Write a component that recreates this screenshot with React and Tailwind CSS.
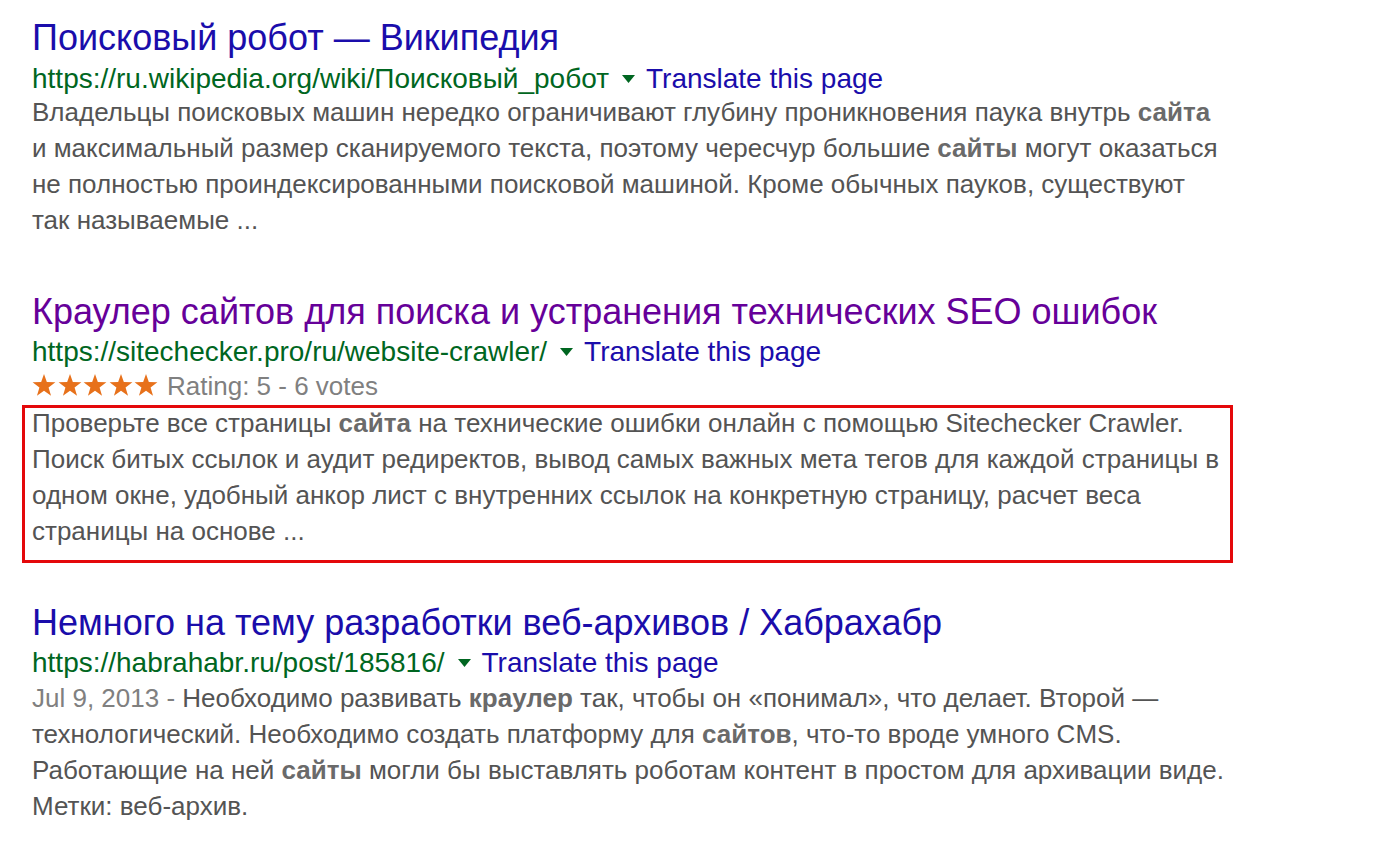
import React from "react";

function Arrow() {
  return (
    <svg width="13" height="8" viewBox="0 0 13 8" className="ml-[13px] mr-[11px] inline-block" aria-hidden="true">
      <path d="M0 0 L13 0 L6.5 8 Z" fill="#006621" />
    </svg>
  );
}

function Star() {
  return (
    <svg width="24" height="23" viewBox="0 0 24 23" aria-hidden="true">
      <polygon
        points="12,0 14.83,8.1 23.4,8.3 16.57,13.5 19.05,21.7 12,16.8 4.95,21.7 7.43,13.5 0.6,8.3 9.17,8.1"
        fill="#e7711b"
      />
    </svg>
  );
}

function UrlRow({ url }) {
  return (
    <div className="flex items-center whitespace-nowrap text-[28px] leading-[30px]">
      <span className="text-[#006621]">{url}</span>
      <Arrow />
      <span className="text-[#1a0dab]">Translate this page</span>
    </div>
  );
}

const B = ({ children }) => <b className="font-bold text-[#6a6a6a]">{children}</b>;

export default function App() {
  return (
    <div className="min-h-[846px] bg-white pl-[32px] pt-[18px] font-['Liberation_Sans',Arial,sans-serif]">
      {/* Result 1 */}
      <div>
        <div className="text-[36px] leading-[40px] text-[#1a0dab] whitespace-nowrap">Поисковый робот — Википедия</div>
        <div className="mt-[6px]">
          <UrlRow url="https://ru.wikipedia.org/wiki/Поисковый_робот" />
        </div>
        <div className="whitespace-nowrap text-[26px] leading-[36px] text-[#545454]">
          Владельцы поисковых машин нередко ограничивают глубину проникновения паука внутрь <B>сайта</B>
          <br />
          и максимальный размер сканируемого текста, поэтому чересчур большие <B>сайты</B> могут оказаться
          <br />
          не полностью проиндексированными поисковой машиной. Кроме обычных пауков, существуют
          <br />
          так называемые ...
        </div>
      </div>

      {/* Result 2 */}
      <div className="mt-[54px]">
        <div className="text-[36px] leading-[40px] text-[#660099] whitespace-nowrap">
          Краулер сайтов для поиска и устранения технических SEO ошибок
        </div>
        <div className="mt-[5px]">
          <UrlRow url="https://sitechecker.pro/ru/website-crawler/" />
        </div>
        <div className="mt-[4px] flex items-center whitespace-nowrap text-[26px] leading-[30px]">
          <div className="flex items-center gap-[1.5px] pb-[1px]">
            <Star />
            <Star />
            <Star />
            <Star />
            <Star />
          </div>
          <span className="ml-[9px] text-[#808080]">Rating: 5 - 6 votes</span>
        </div>
        <div className="mt-[4px] ml-[-10px] w-[1211px] border-[3px] border-[#e4080a] pl-[7px] pb-[11px]">
          <div className="mt-[-3px] whitespace-nowrap text-[26px] leading-[36px] text-[#545454]">
            Проверьте все страницы <B>сайта</B> на технические ошибки онлайн с помощью Sitechecker Crawler.
            <br />
            Поиск битых ссылок и аудит редиректов, вывод самых важных мета тегов для каждой страницы в
            <br />
            одном окне, удобный анкор лист с внутренних ссылок на конкретную страницу, расчет веса
            <br />
            страницы на основе ...
          </div>
        </div>
      </div>

      {/* Result 3 */}
      <div className="mt-[40px]">
        <div className="text-[36px] leading-[40px] text-[#1a0dab] whitespace-nowrap">
          Немного на тему разработки веб-архивов / Хабрахабр
        </div>
        <div className="mt-[5px]">
          <UrlRow url="https://habrahabr.ru/post/185816/" />
        </div>
        <div className="mt-[2px] whitespace-nowrap text-[26px] leading-[36px] text-[#545454]">
          <span className="text-[#808080]">Jul 9, 2013 - </span>Необходимо развивать <B>краулер</B> так, чтобы он «понимал», что делает. Второй —
          <br />
          технологический. Необходимо создать платформу для <B>сайтов</B>, что-то вроде умного CMS.
          <br />
          Работающие на ней <B>сайты</B> могли бы выставлять роботам контент в простом для архивации виде.
          <br />
          Метки: веб-архив.
        </div>
      </div>
    </div>
  );
}
